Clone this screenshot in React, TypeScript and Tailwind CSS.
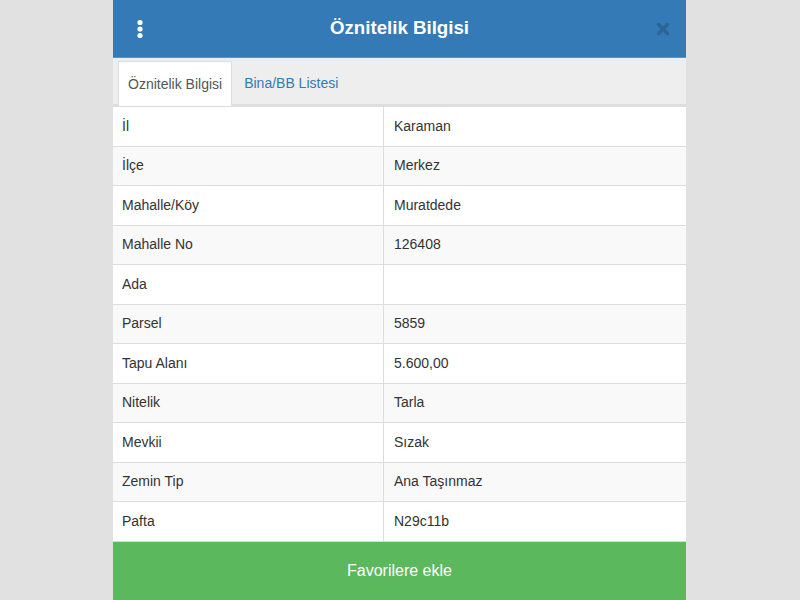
import React from "react";

const rows: [string, string][] = [
  ["İl", "Karaman"],
  ["İlçe", "Merkez"],
  ["Mahalle/Köy", "Muratdede"],
  ["Mahalle No", "126408"],
  ["Ada", ""],
  ["Parsel", "5859"],
  ["Tapu Alanı", "5.600,00"],
  ["Nitelik", "Tarla"],
  ["Mevkii", "Sızak"],
  ["Zemin Tip", "Ana Taşınmaz"],
  ["Pafta", "N29c11b"],
];

export default function App() {
  return (
    <div
      className="w-[800px] h-[600px] overflow-hidden bg-[#e1e1e1] flex pl-[113px]"
      style={{ fontFamily: '"Liberation Sans", Arial, sans-serif' }}
    >
      <div className="w-[573px] h-[600px] flex flex-col bg-white">
        <div className="h-[58px] shrink-0 bg-[#337ab7] border-b border-[#5a93c6] flex items-center px-[22px]">
          <svg width="10" height="20" viewBox="0 0 10 20" className="shrink-0">
            <circle cx="5" cy="3.5" r="2.6" fill="#fff" />
            <circle cx="5" cy="10" r="2.6" fill="#fff" />
            <circle cx="5" cy="16.5" r="2.6" fill="#fff" />
          </svg>
          <div className="flex-1 text-center text-white text-[18.7px] font-bold pr-[2px]">Öznitelik Bilgisi</div>
          <svg width="14" height="14" viewBox="0 0 14 14" className="shrink-0 mr-[-6px]">
            <path d="M2.5 2.5 L11.5 11.5 M11.5 2.5 L2.5 11.5" stroke="#2a6496" strokeWidth="3.4" strokeLinecap="round" />
          </svg>
        </div>
        <div className="h-[48px] shrink-0 bg-[#eeeeee] border-b-2 border-[#dddddd] flex items-end pl-[5px]">
          <div className="h-[45px] mb-[-2px] px-[9px] flex items-center bg-white border border-b-0 border-[#dddddd] text-[14px] text-[#555555]">
            Öznitelik Bilgisi
          </div>
          <div className="h-[45px] mb-[-2px] px-[12px] flex items-center text-[14px] text-[#337ab7]">Bina/BB Listesi</div>
        </div>
        <div className="flex flex-col">
          {rows.map(([k, v], i) => (
            <div
              key={k}
              className={`flex h-[39.5px] border-t border-[#dddddd] text-[14px] text-[#333333] ${i % 2 === 1 ? "bg-[#f9f9f9]" : "bg-white"}`}
            >
              <div className="w-[271px] shrink-0 border-r border-[#dddddd] flex items-center pl-[9px]">{k}</div>
              <div className="flex-1 flex items-center pl-[10px]">{v}</div>
            </div>
          ))}
        </div>
        <div className="flex-1 bg-[#5cb85c] border-t border-[#d9d9d9] flex items-center justify-center text-white text-[16px]">
          Favorilere ekle
        </div>
      </div>
    </div>
  );
}
